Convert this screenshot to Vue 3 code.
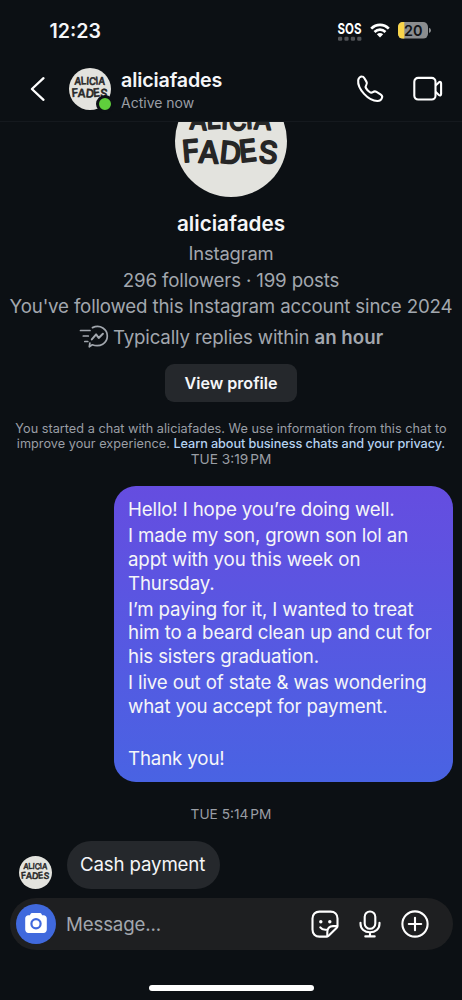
<script setup>
import { h } from 'vue'

const paragraphs = [
  ['Hello! I hope you’re doing well.'],
  ['I made my son, grown son lol an', 'appt with you this week on', 'Thursday.'],
  ['I’m paying for it, I wanted to treat', 'him to a beard clean up and cut for', 'his sisters graduation.'],
  ['I live out of state & was wondering', 'what you accept for payment.'],
  ['\u00a0'],
  ['Thank you!'],
]

// Round account logo, scaled by the class of the place that uses it.
const letter = {
  fill: '#262626',
  stroke: '#262626',
  'stroke-width': 1.5,
  'stroke-linejoin': 'round',
  'font-family': 'Inter, sans-serif',
  'font-weight': 500,
  lengthAdjust: 'spacingAndGlyphs',
}
const Logo = () =>
  h('svg', { viewBox: '0 0 112 112' }, [
    h('circle', { cx: 56, cy: 56, r: 56, fill: '#e3e3de' }),
    h('text', { ...letter, x: 14, y: 44, 'font-size': 28, textLength: 82, rotate: '4 -3 3 6 -4 3' }, 'ALICIA'),
    h('text', { ...letter, x: 8, y: 77.5, 'font-size': 30.5, textLength: 94, rotate: '-5 3 6 -6 4' }, 'FADES'),
  ])
</script>

<template>
  <div class="screen">
    <div class="status">
      <span class="clock">12:23</span>
      <svg class="sos" viewBox="0 0 26 20">
        <text x="0.5" y="12.2" font-size="15" font-weight="700" font-family="Inter, sans-serif" fill="#fff" textLength="24" lengthAdjust="spacingAndGlyphs">SOS</text>
        <g fill="#505357">
          <rect x="1" y="14.8" width="4.2" height="4" rx="1.2" /><rect x="7.4" y="14.8" width="4.2" height="4" rx="1.2" />
          <rect x="13.8" y="14.8" width="4.2" height="4" rx="1.2" /><rect x="20.2" y="14.8" width="4.2" height="4" rx="1.2" />
        </g>
      </svg>
      <svg class="wifi" viewBox="0 0 20 15">
        <g fill="none" stroke="#fff" stroke-width="2.7">
          <path d="M1.2 5.6Q5 1.8 10 1.8T18.8 5.6" />
          <path d="M4.5 9Q7 6.6 10 6.6T15.5 9" />
        </g>
        <path d="M6.8 11.3Q10 8.8 13.2 11.3L10 14.6Z" fill="#fff" />
      </svg>
      <svg class="battery" viewBox="0 0 34 17">
        <clipPath id="cell"><rect width="30" height="16.6" rx="4.8" /></clipPath>
        <g clip-path="url(#cell)">
          <rect width="30" height="17" fill="#8b8d8f" />
          <rect width="6.3" height="17" fill="#f9d54a" />
        </g>
        <path d="M31 5.8q2 .8 2 2.6t-2 2.6z" fill="#8b8d8f" />
        <text x="6" y="13.7" font-size="15" font-weight="600" font-family="Inter, sans-serif" fill="#111417" textLength="18.500" lengthAdjust="spacingAndGlyphs">20</text>
      </svg>
    </div>

    <header class="bar">
      <svg class="back" viewBox="0 0 16 26"><path d="M13.5 2.2L1.900 13L13.5 23.8" fill="none" stroke="#fff" stroke-width="2.3" stroke-linecap="round" stroke-linejoin="round" /></svg>
      <div class="face">
        <Logo class="face-logo" />
        <span class="online"></span>
      </div>
      <div class="who">
        <div class="name">aliciafades</div>
        <div class="active">Active now</div>
      </div>
      <svg class="phone" viewBox="0 0 28 28">
        <path d="M2.2 5.2C2.5 3 4.4 1.4 6 1.5c1.200 0 1.800.8 2.400 1.800l2 3.300c.8 1.300.7 2.300-.1 3.400-.8 1.100-1 1.900-.3 3.100.8 1.400 2.100 2.800 3.600 3.900 1.200.9 2.200.9 3.300.1 1.200-.9 2.300-1 3.600-.2l4 2.400c1.400.8 2 1.800 1.600 3.200-.5 1.900-2.300 3.500-4.700 3.500-4.600 0-9.600-3.100-13.300-7.100C4.500 15 1.700 9.900 2.200 5.200Z" fill="none" stroke="#fff" stroke-width="2.100" stroke-linejoin="round" />
      </svg>
      <svg class="video" viewBox="0 0 30 26">
        <g fill="none" stroke="#fff" stroke-width="2.100" stroke-linejoin="round">
          <rect x="1.300" y="1.900" width="21.200" height="21.600" rx="3.800" />
          <path d="M22.500 9.600l3.400-3.200c1-.9 2.200-.5 2.200.9v10.800c0 1.400-1.200 1.800-2.200.9l-3.400-3.200" />
        </g>
      </svg>
    </header>

    <main class="thread">
      <section class="profile">
        <Logo class="big-logo" />
        <h1>aliciafades</h1>
        <p class="line app-name">Instagram</p>
        <p class="line counts">296 followers · 199 posts</p>
        <p class="line since">You've followed this Instagram account since 2024</p>
        <p class="line replies">
          <svg class="fast" viewBox="0 0 30 24">
            <g fill="none" stroke="#a2a7ae" stroke-width="1.700" stroke-linecap="round" stroke-linejoin="round">
              <path d="M1.500 5.500h9.500M4.300 11h5M5.800 16.500h3" />
              <path d="M13.500 2.600C21.500-.9 28.300 4.500 28.300 11c0 7.300-7.300 11.600-15 8.800L10.300 21.800l.6-3.800" />
              <path d="M12.800 14.400l4.300-5 2.600 3.600 4.200-4.200" stroke-width="2" />
            </g>
          </svg>
          <span>Typically replies within <b>an hour</b></span>
        </p>
        <button class="view">View profile</button>
        <p class="note">
          <span class="note-one">You started a chat with aliciafades. We use information from this chat to</span><br />
          <span class="note-two">improve your experience. <a>Learn about business chats and your privacy.</a></span>
        </p>
      </section>

      <div class="stamp first">TUE 3:19<i></i>PM</div>

      <div class="sent">
        <p v-for="(lines, i) in paragraphs" :key="i">
          <span v-for="line in lines" :key="line">{{ line }}</span>
        </p>
      </div>

      <div class="stamp second">TUE 5:14<i></i>PM</div>

      <div class="received">
        <Logo class="small-logo" />
        <div class="reply">Cash payment</div>
      </div>
    </main>

    <footer class="composer">
      <div class="camera">
        <svg viewBox="0 0 24 22">
          <path d="M8 1h8c.7 0 1.200.4 1.500 1l.6 1.200H19.500c2 0 3.300 1.300 3.300 3.300V17.500c0 2-1.300 3.400-3.300 3.400H4.500c-2 0-3.300-1.400-3.300-3.400V6.500c0-2 1.300-3.300 3.300-3.300H5.900L6.500 2C6.800 1.400 7.300 1 8 1Z" fill="#fff" />
          <circle cx="12" cy="11.700" r="4.600" fill="#fff" stroke="#4069dd" stroke-width="2.200" />
        </svg>
      </div>
      <span class="hint">Message...</span>
      <svg class="sticker" viewBox="0 0 28 28">
        <g fill="none" stroke="#fff" stroke-width="2.100" stroke-linecap="round" stroke-linejoin="round">
          <path d="M15.600 26.600H8.500c-4.300 0-7-2.700-7-7V8.600c0-4.300 2.700-7 7-7h11c4.300 0 7 2.700 7 7v7.100c0 1-.4 1.700-1 2.300l-7.600 7.600c-.6.6-1.300 1-2.300 1Z" />
          <path d="M16.300 26.300v-4.300c0-3.600 2-5.900 5.700-5.900h4.200" />
          <path d="M9.300 17.300c1.300 1.800 3.300 2.700 6 2.400" />
        </g>
        <circle cx="9.800" cy="11.700" r="1.700" fill="#fff" /><circle cx="18.800" cy="11.700" r="1.700" fill="#fff" />
      </svg>
      <svg class="mic" viewBox="0 0 22 28">
        <g fill="none" stroke="#fff" stroke-width="2.100" stroke-linecap="round">
          <rect x="5.700" y="1.500" width="10.600" height="17.300" rx="5.300" />
          <path d="M1.500 12.800v1C1.500 19 5.500 22.300 11 22.300S20.500 19 20.500 13.800v-1M11 22.300v4M6.300 26.400h9.400" />
        </g>
      </svg>
      <svg class="plus" viewBox="0 0 28 28">
        <g fill="none" stroke="#fff" stroke-width="2.100" stroke-linecap="round">
          <circle cx="14" cy="14" r="12.600" /><path d="M14 7.800v12.400M7.800 14h12.400" />
        </g>
      </svg>
    </footer>

    <div class="home"></div>
  </div>
</template>

<style>
body { margin: 0; background: #0c1014; }
</style>

<style scoped>
.screen {
  width: 462px;
  height: 1000px;
  overflow: hidden;
  display: flex;
  flex-direction: column;
  background: #0c1014;
  color: #f5f6f8;
  font-family: Inter, "Liberation Sans", sans-serif;
  font-size: 18.7px;
  letter-spacing: -0.16px;
}
svg { display: block; flex: none; }
p, h1 { margin: 0; }

.status { height: 61px; display: flex; align-items: flex-start; box-sizing: border-box; padding-top: 22px; }
.clock { margin-left: 49.5px; width: 287px; margin-top: -3px; font-size: 19.6px; line-height: 24px; font-weight: 600; letter-spacing: 0; }
.sos { width: 26px; height: 20px; overflow: visible; letter-spacing: 0; }
.wifi { width: 20px; height: 15px; margin: 1px 0 0 7px; }
.battery { width: 34px; height: 17px; margin-left: 8.500px; overflow: visible; letter-spacing: 0; }

.bar { height: 61px; box-sizing: border-box; border-bottom: 1px solid #15191e; display: flex; align-items: flex-start; padding: 0 19px 0 30px; }
.back { width: 16px; height: 26px; margin-top: 15px; }
.face { position: relative; width: 42px; height: 42px; margin: 7px 10px 0 23px; }
.face-logo { width: 42px; height: 42px; }
.online { position: absolute; left: 27px; top: 27px; width: 12px; height: 12px; border-radius: 50%; border: 3px solid #0c1014; background: #5fcf3c; }
.who { flex: 1; padding-top: 7px; }
.name { font-size: 19.700px; line-height: 24px; font-weight: 600; letter-spacing: -0.150px; }
.active { font-size: 14px; line-height: 21px; color: #9a9ea5; letter-spacing: 0; }
.phone { width: 28px; height: 28px; margin: 14px 29px 0 0; }
.video { width: 30px; height: 26px; margin-top: 15px; }

.thread { height: 776px; overflow: hidden; flex: none; }
.profile { display: flex; flex-direction: column; align-items: center; color: #a2a7ae; text-align: center; white-space: nowrap; }
.big-logo { width: 112px; height: 112px; margin-top: -37px; }
h1 { margin-top: 14px; font-size: 20.700px; line-height: 26px; font-weight: 600; color: #f5f6f8; letter-spacing: 0; }
.line { line-height: 26px; }
.app-name { margin-top: 2px; line-height: 28px; font-size: 18.400px; }
.counts, .since, .replies span { position: relative; top: 1px; }
.replies { margin-top: 5px; display: flex; align-items: center; gap: 4px; }
.replies b { font-weight: 600; letter-spacing: 0; }
.fast { width: 30px; height: 24px; }
.view { margin-top: 14px; width: 132px; height: 38px; padding: 0; border: 0; border-radius: 9px; background: #25282c; color: #f5f6f8; font: 600 16.100px/38px Inter, sans-serif; letter-spacing: 0; }
.note { margin-top: 18.500px; font-size: 12.700px; line-height: 15.500px; letter-spacing: 0.020px; color: #9a9ea5; }
.note a { color: #b5d2f0; font-weight: 500; letter-spacing: -0.080px; }

.stamp { text-align: center; font-size: 13.700px; letter-spacing: 0; color: #9a9ea5; }
.stamp i { display: inline-block; width: 2px; }
.first { line-height: 15.500px; }
.second { line-height: 16px; margin-top: 24.500px; }

.sent { margin: 19px 9.500px 0 114px; height: 295.500px; box-sizing: border-box; padding: 12.200px 0 0 14px; border-radius: 22px; background: linear-gradient(#654de0, #4963e3); white-space: nowrap; }
.sent p { margin-bottom: 2.200px; }
.sent span { display: block; line-height: 23.750px; letter-spacing: -0.140px; }

.received { display: flex; align-items: flex-end; margin-top: 19px; }
.small-logo { width: 33px; height: 33px; margin-left: 19px; }
.reply { margin-left: 14.500px; width: 153.500px; height: 47.500px; box-sizing: border-box; padding-left: 13.500px; border-radius: 24px; background: #25282c; line-height: 47px; }

.composer { margin: 0 9.500px 0 10px; height: 52px; flex: none; box-sizing: border-box; border-radius: 26px; background: #1e1f21; display: flex; align-items: center; padding: 0 24px 0 5.500px; }
.camera { width: 40px; height: 40px; border-radius: 50%; background: #4069dd; display: flex; align-items: center; justify-content: center; }
.camera svg { width: 24px; height: 22px; margin-top: -2px; }
.hint { flex: 1; margin-left: 10.500px; color: #a2a7ae; }
.sticker { width: 28px; height: 28px; }
.mic { width: 22px; height: 28px; margin-left: 20px; }
.plus { width: 28px; height: 28px; margin-left: 20px; }

.home { width: 165px; height: 6px; margin: 34.500px 0 0 148.500px; border-radius: 3px; background: #fff; }
</style>
